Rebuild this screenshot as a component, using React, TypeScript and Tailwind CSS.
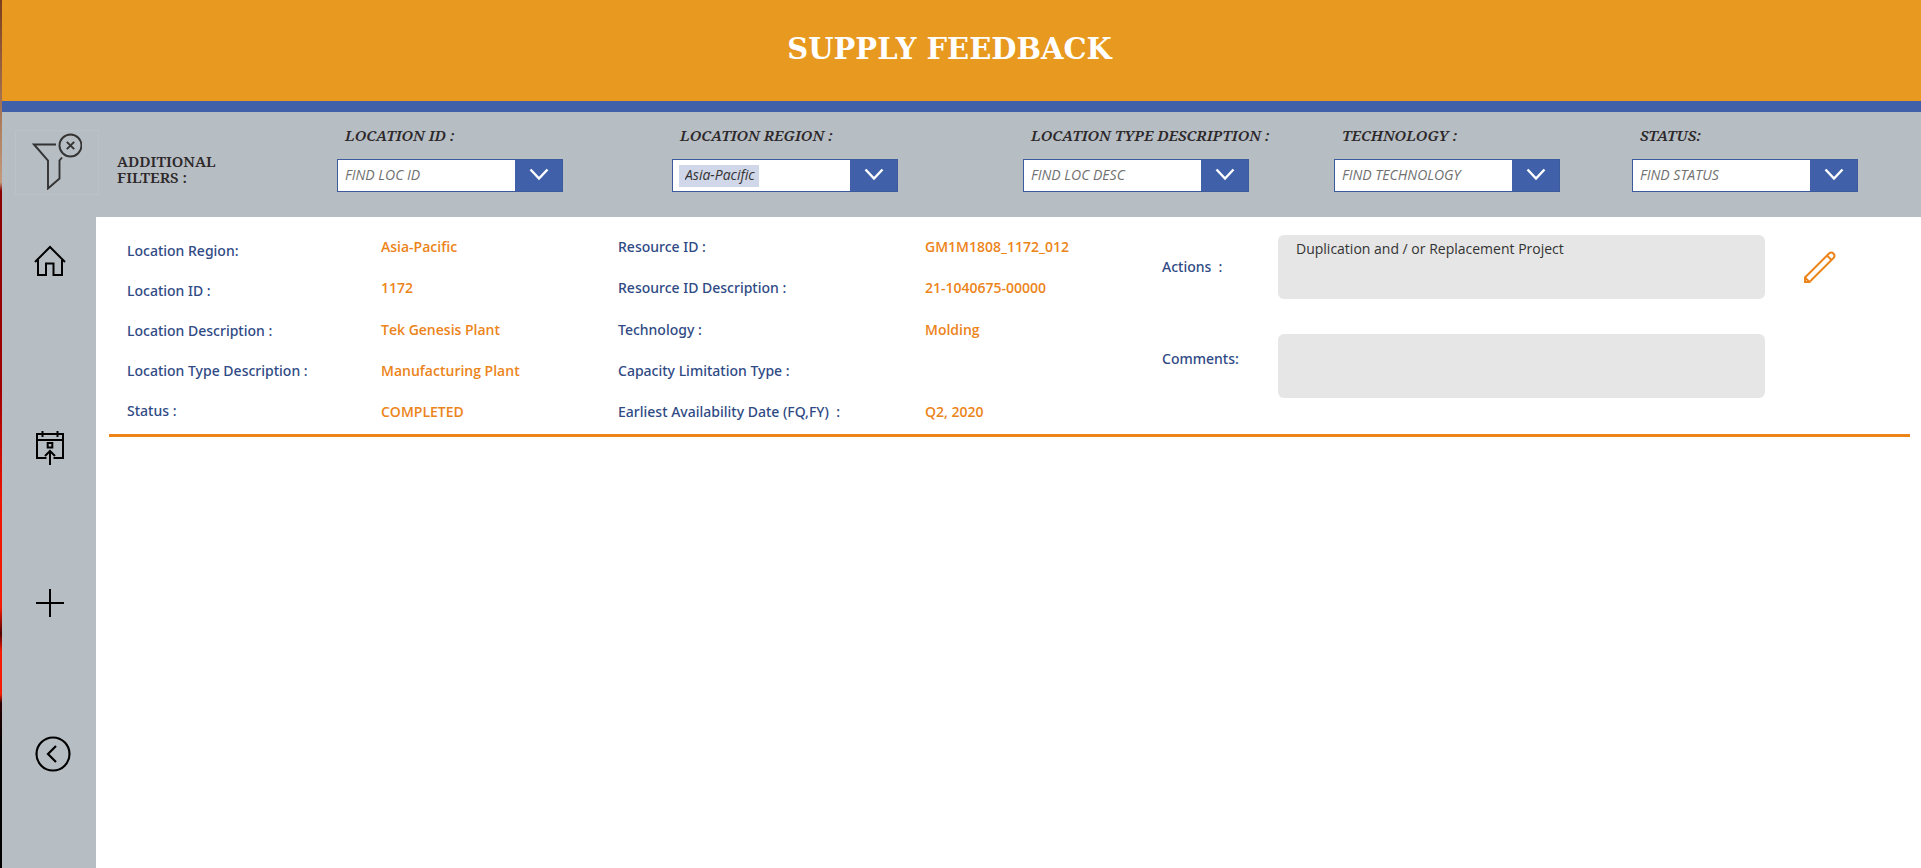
import type { ReactNode } from "react";

type Filter = { id: string; label: string; placeholder: string; value?: string };
type Field = { label: string; value: string };

const filters: Filter[] = [
  { id: "loc-id", label: "LOCATION ID :", placeholder: "FIND LOC ID" },
  { id: "loc-region", label: "LOCATION REGION :", placeholder: "", value: "Asia-Pacific" },
  { id: "loc-desc", label: "LOCATION TYPE DESCRIPTION :", placeholder: "FIND LOC DESC" },
  { id: "technology", label: "TECHNOLOGY :", placeholder: "FIND TECHNOLOGY" },
  { id: "status", label: "STATUS:", placeholder: "FIND STATUS" },
];

const locationFields: Field[] = [
  { label: "Location Region:", value: "Asia-Pacific" },
  { label: "Location ID :", value: "1172" },
  { label: "Location Description :", value: "Tek Genesis Plant" },
  { label: "Location Type Description :", value: "Manufacturing Plant" },
  { label: "Status :", value: "COMPLETED" },
];

const resourceFields: Field[] = [
  { label: "Resource ID :", value: "GM1M1808_1172_012" },
  { label: "Resource ID Description :", value: "21-1040675-00000" },
  { label: "Technology :", value: "Molding" },
  { label: "Capacity Limitation Type :", value: "" },
  { label: "Earliest Availability Date (FQ,FY)\u00a0 :", value: "Q2, 2020" },
];

function FilterSelect({ id, label, placeholder, value }: Filter) {
  return (
    <div>
      <label htmlFor={id} className="block h-5 pl-2 font-['Noto_Serif','Liberation_Serif',serif] text-[15px] leading-5 font-semibold whitespace-nowrap text-[#2d282a] italic">
        {label}
      </label>
      <div className="relative mt-[14px] h-[33px] w-[226px] border border-[#3c5a9c] bg-white">
        {value && <span className="absolute top-[5px] left-1.5 h-[22px] w-20 bg-[#d0d7e8]" />}
        <select
          id={id}
          defaultValue={value ?? ""}
          className={`relative block size-full appearance-none bg-transparent pr-12 pb-0.5 font-['Open_Sans','Noto_Sans',sans-serif] text-sm italic outline-none ${value ? "pl-3 text-[#333333]" : "pl-[7px] text-[#707070]"}`}
        >
          {value ? <option value={value}>{value}</option> : <option value="">{placeholder}</option>}
        </select>
        <span className="pointer-events-none absolute inset-y-0 right-0 flex w-[47px] items-center justify-center bg-[#4061a9] pb-0.5">
          <svg width="20" height="13" viewBox="0 0 20 13" fill="none" stroke="#fff" strokeWidth="2.4" aria-hidden="true">
            <path d="M1.5 1.5 10 10.5 18.5 1.5" />
          </svg>
        </span>
      </div>
    </div>
  );
}

function Column({ className, children }: { className: string; children: ReactNode }) {
  return <div className={`flex flex-col justify-between text-sm leading-5 whitespace-nowrap ${className}`}>{children}</div>;
}

function FunnelIcon() {
  return (
    <svg width="50" height="58" viewBox="0 0 50 58" fill="none" stroke="#333" strokeWidth="1.9" aria-hidden="true">
      <path d="M24 12.500H2L16 28.500V56.500L27.500 46.500V28.500L30 25.500" />
      <circle cx="38.500" cy="13.500" r="11" />
      <path d="M34.800 9.800 42.200 17.200M42.200 9.800 34.800 17.200" />
    </svg>
  );
}

function HomeIcon() {
  return (
    <svg width="32" height="32" viewBox="0 0 32 32" fill="none" stroke="#000" strokeWidth="2" aria-hidden="true">
      <path d="M1 17 16 2 31 17" />
      <path d="M4 14.500V30H12V18.500H19.500V30H28V14.500" />
    </svg>
  );
}

function CalendarIcon() {
  return (
    <svg width="28" height="34" viewBox="0 0 28 34" fill="none" stroke="#000" strokeWidth="2" aria-hidden="true">
      <path d="M10.500 27H1V3H27V27H17.500" />
      <path d="M1 9H27M6.500 0V6M21.500 0V6" />
      <path d="M11.700 12H16.300V16.600H11.700Z" />
      <path d="M14 34V20M9 25 14 20 19 25" />
    </svg>
  );
}

function PlusIcon() {
  return (
    <svg width="28" height="28" viewBox="0 0 28 28" fill="none" stroke="#000" strokeWidth="2" aria-hidden="true">
      <path d="M14 0V28M0 14H28" />
    </svg>
  );
}

function BackIcon() {
  return (
    <svg width="36" height="36" viewBox="0 0 36 36" fill="none" stroke="#000" strokeWidth="2.2" aria-hidden="true">
      <circle cx="18" cy="18" r="16.500" />
      <path d="M21 10 13 18 21 26" />
    </svg>
  );
}

function PencilIcon() {
  return (
    <svg width="34" height="34" viewBox="0 0 34 34" fill="none" stroke="#ec841a" strokeWidth="2" aria-hidden="true">
      <path d="M2 31V26.500L26 2.500C29-.3 33.300 4 30.500 7L6.500 31Z" />
      <path d="M2 26.500 6.500 31M24 4.500 28.500 9" strokeWidth="1.800" />
    </svg>
  );
}

export default function App() {
  return (
    <div className="flex min-h-screen bg-white font-['Noto_Sans','Open_Sans',sans-serif]">
      <div className="w-0.5 shrink-0 bg-[linear-gradient(to_bottom,#7b3f1c_0%,#c29a7c_21%,#8a0000_22%,#a00000_45%,#ee1503_58%,#f51b05_70%,#500000_73%,#f51b05_75%,#f51b05_80%,#2a0000_81%,#000_86%)]" />
      <div className="flex min-w-0 flex-1 flex-col">
        <header className="flex h-28 items-center justify-center border-b-[11px] border-[#4061a9] bg-[#e8991f] pr-6 pb-1">
          <h1 className="font-['DejaVu_Serif',serif] text-[29px] leading-9 font-bold text-white">SUPPLY FEEDBACK</h1>
        </header>

        <section className="flex h-[105px] bg-[#b6bdc3]" aria-label="Filters">
          <div className="flex w-[335px] shrink-0 pl-[13px]">
            <button type="button" aria-label="Clear filters" className="mt-[18px] flex h-[65px] w-[84px] items-start border border-[#bbc3ca] pt-px pl-4">
              <FunnelIcon />
            </button>
            <h2 className="mt-[41px] ml-[18px] w-28 font-['Noto_Serif','Liberation_Serif',serif] text-[15px] leading-4 font-semibold text-[#2d282a]">
              ADDITIONAL FILTERS :
            </h2>
          </div>
          <div className="grid flex-1 grid-cols-[335fr_351fr_311fr_298fr_289fr] pt-[13px]">
            {filters.map((f) => (
              <FilterSelect key={f.id} {...f} />
            ))}
          </div>
        </section>

        <div className="flex flex-1">
          <nav className="flex w-[94px] shrink-0 flex-col items-center bg-[#b6bdc3] pt-7 pl-0.5" aria-label="Main">
            <button type="button" aria-label="Home"><HomeIcon /></button>
            <button type="button" aria-label="Schedule" className="mt-[154px]"><CalendarIcon /></button>
            <button type="button" aria-label="Add" className="mt-[124px]"><PlusIcon /></button>
            <button type="button" aria-label="Back" className="mt-[119px] ml-1.5"><BackIcon /></button>
          </nav>

          <main className="flex-1 pr-[11px] pl-[13px]">
            <article className="flex h-[220px] items-start border-b-[3px] border-[#ec841a] pl-[18px]">
              <Column className="mt-6 h-[180px] w-[254px] font-medium text-[#2f4a85]">
                {locationFields.map((f) => <span key={f.label}>{f.label}</span>)}
              </Column>
              <Column className="mt-5 h-[185px] w-[237px] font-['Open_Sans',sans-serif] font-semibold text-[#ec841a]">
                {locationFields.map((f) => <span key={f.label}>{f.value}</span>)}
              </Column>
              <Column className="mt-5 h-[185px] w-[307px] font-medium text-[#2f4a85]">
                {resourceFields.map((f) => <span key={f.label}>{f.label}</span>)}
              </Column>
              <Column className="mt-5 h-[185px] w-[237px] font-['Open_Sans',sans-serif] font-semibold text-[#ec841a]">
                {resourceFields.map((f) => <span key={f.label} className="h-5">{f.value}</span>)}
              </Column>
              <div className="mt-[18px] flex flex-1 flex-col gap-[35px] text-sm leading-5">
                <div className="flex items-center">
                  <label htmlFor="actions" className="w-[116px] font-medium whitespace-pre text-[#2f4a85]">{"Actions  :"}</label>
                  <textarea id="actions" readOnly defaultValue="Duplication and / or Replacement Project" className="h-16 min-w-0 flex-1 resize-none rounded-md bg-[#e6e6e6] px-[18px] py-1 font-['Open_Sans',sans-serif] text-[#333333] outline-none" />
                </div>
                <div className="flex items-center">
                  <label htmlFor="comments" className="w-[116px] pb-3.5 font-medium text-[#2f4a85]">Comments:</label>
                  <textarea id="comments" readOnly className="h-16 min-w-0 flex-1 resize-none rounded-md bg-[#e6e6e6] px-[18px] py-1 outline-none" />
                </div>
              </div>
              <button type="button" aria-label="Edit" className="mt-[34px] mr-[73px] ml-[38px]"><PencilIcon /></button>
            </article>
          </main>
        </div>
      </div>
    </div>
  );
}
